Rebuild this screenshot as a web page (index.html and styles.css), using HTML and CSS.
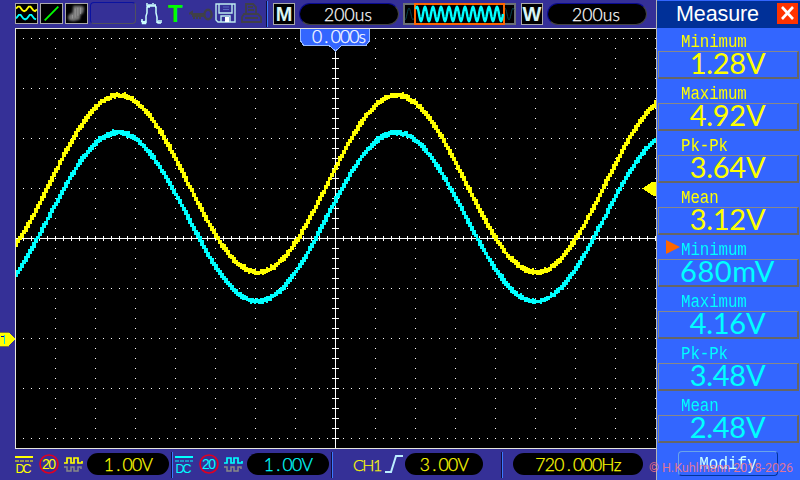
FILE: index.html
```html
<!DOCTYPE html>
<html lang="en">
<head>
<meta charset="utf-8">
<title>Oscilloscope</title>
<link rel="stylesheet" href="styles.css">
</head>
<body>
<div class="scope">
  <main class="main">
    <header class="topbar">
      <svg class="ico box" width="23" height="21" viewBox="0 0 23 21"><path d="M0 5l2-2 2 0 3 4 2 1 2-1 3-4 2 0 3 4 2 1 2-2" stroke="#ff0"/><path d="M0 16l3-4 2 0 3 4 2 1 2-1 3-4 2 0 3 4 2 1" stroke="#0ff"/></svg>
      <svg class="ico box gap2" width="23" height="21" viewBox="0 0 23 21"><path d="M4 18L19 3" stroke="#0f0"/></svg>
      <svg class="ico box gap2" width="23" height="21" viewBox="0 0 23 21"><path class="blob" d="M8 2h9l3 2-1 6-3 2-1 5-7 2-5-1-1-4 2-3 3-1z" fill="#777"/><path d="M10 5v10M13 4v9M7 12v4M16 4v7" stroke="#999" stroke-width="1"/></svg>
      <div class="slot"></div>
      <svg class="ico pulse" width="21" height="22" viewBox="0 0 21 22"><path d="M0 18.500h1.500v2h3v-3M1 18v-2M3 20v-2M5 20V13l1-3V4h3M14 4h1v6l1 4v4l1 2h3M6 3V0M8 3V1M10 3V1M12 3V0M14 3V1M6 3h9M18 20v-3M20 20v-3M16 20v-4" stroke="#cff" stroke-width="1.500"/></svg>
      <span class="trig">T</span>
      <svg class="ico key" width="24" height="14" viewBox="0 0 24 14"><path d="M0 6l3-2v2h12M3 8h12M5 8v3M8 8v3M11 8v3M3 7h11" stroke="#404048" stroke-width="1.9"/><ellipse cx="19" cy="6.5" rx="3.6" ry="4.8" stroke="#404048" stroke-width="2.4"/></svg>
      <svg class="ico floppy" width="21" height="20" viewBox="0 0 21 20"><path d="M1 1h19v18H3l-2-2zM4 1v9h13V1M6 19v-6h9v6" stroke="#bdeaf0" stroke-width="1.400"/><path d="M8 4h6M8 6.500h6" stroke="#5a68c0" stroke-width="1"/><path d="M10 14h4v5h-4z" fill="#fff"/></svg>
      <svg class="ico printer" width="21" height="21" viewBox="0 0 21 21"><path d="M5 10V1h7l3 3v6M7 4h5M7 7h6M3 11h14l3 3v5H1v-5zM4 15h13" stroke="#404048" stroke-width="1.8"/></svg>
      <i class="sep top"></i>
      <b class="mode m">M</b>
      <div class="pill tb"><span class="seg">200us</span></div>
      <svg class="preview" width="113" height="22" viewBox="0 0 113 22"><rect x="1" y="1" width="111" height="20" fill="#000" stroke="#6b7075" stroke-width="2"/><path id="ghost" stroke="#07444d" fill="none"/><rect x="12" y="1" width="89" height="20" fill="#000" stroke="#f60" stroke-width="2"/><path id="mini" stroke="#0ff" stroke-width="2.400" fill="none"/></svg>
      <b class="mode w">W</b>
      <div class="pill tb"><span class="seg">200us</span></div>
    </header>

    <section class="plot">
      <svg width="656" height="421" viewBox="0 28 656 421" shape-rendering="crispEdges">
        <path d="M15 28H656V449H15z" fill="#000"/>
        <g id="grid"></g>
        <path d="M15.500 449V28.500H656M15 448.500H656" stroke="#e6e6dc" fill="none"/>
        <path d="M335.500 50V448M16 238.500H656" stroke="#fff"/>
        <path id="ticks" stroke="#fff"/>
        <path id="ch1" stroke="#ff0"/>
        <path id="ch2" stroke="#0ff"/>
        <path d="M300 29h69v12l-3 4H304l-4-4z" fill="#36f"/>
        <path d="M328 45h14l-7 7z" fill="#36f"/>
        <path d="M300.500 29v12l3 4h25l7 6 7-6h24l3-4V29" fill="none" stroke="#9bf"/>
        <path d="M642 188.500l11-7h3v14h-3z" fill="#ff0"/>
        <path d="M0 332.500h9l6 6.500-6 6.500H0z" fill="#ff0"/>
        <path d="M0 332.500h9M0 346.500h9" stroke="#77713f"/>
        <path d="M1 336.500h3v7" stroke="#00a" stroke-width="1" fill="none"/><path d="M4.500 335v9" stroke="#0dd"/>
      </svg>
      <span class="seg offset">0<i>.</i>000s</span>
    </section>

    <footer class="bottombar">
      <div class="chan c1">
        <svg width="18" height="20" viewBox="0 0 18 20"><path d="M0 2h18" stroke="currentColor" stroke-width="2"/><path d="M0 6h18" stroke="currentColor" stroke-dasharray="4 1"/><text x="0.500" y="17.500" textLength="16" fill="currentColor">DC</text></svg>
        <svg class="bw" width="20" height="20" viewBox="0 0 20 20"><circle cx="10" cy="10" r="9" fill="none" stroke="#e00020" stroke-width="1.700"/><text class="big" x="3" y="15" textLength="14" fill="currentColor">20</text></svg>
        <svg class="sq" width="19" height="17" viewBox="0 0 19 17"><path d="M0 7h3V2h4v5h3V2h4v5h4V5" stroke="currentColor" stroke-width="1.700" fill="none"/><path d="M0 11h3v4h4v-4h3v4h4v-4h3v2" stroke="#888" stroke-width="1.500" fill="none"/></svg>
        <div class="pill"><span class="seg">1<i>.</i>00V</span></div>
      </div>
      <i class="sep"></i>
      <div class="chan c2">
        <svg width="18" height="20" viewBox="0 0 18 20"><path d="M0 2h18" stroke="currentColor" stroke-width="2"/><path d="M0 6h18" stroke="currentColor" stroke-dasharray="4 1"/><text x="0.500" y="17.500" textLength="16" fill="currentColor">DC</text></svg>
        <svg class="bw" width="20" height="20" viewBox="0 0 20 20"><circle cx="10" cy="10" r="9" fill="none" stroke="#e00020" stroke-width="1.700"/><text class="big" x="3" y="15" textLength="14" fill="currentColor">20</text></svg>
        <svg class="sq" width="19" height="17" viewBox="0 0 19 17"><path d="M0 7h3V2h4v5h3V2h4v5h4V5" stroke="currentColor" stroke-width="1.700" fill="none"/><path d="M0 11h3v4h4v-4h3v4h4v-4h3v2" stroke="#888" stroke-width="1.500" fill="none"/></svg>
        <div class="pill"><span class="seg">1<i>.</i>00V</span></div>
      </div>
      <i class="sep"></i>
      <div class="trigger">
        <span class="seg">CH1</span>
        <svg width="18" height="20" viewBox="0 0 18 20"><path d="M0 18h6L11 2h7" fill="none" stroke="#bef" stroke-width="2"/></svg>
        <div class="pill"><span class="seg">3<i>.</i>00V</span></div>
      </div>
      <i class="sep"></i>
      <div class="pill freq"><span class="seg">720<i>.</i>000Hz</span></div>
    </footer>
  </main>

  <aside class="panel">
    <header class="title"><span>Measure</span><svg width="21" height="21" viewBox="0 0 21 21"><path d="M0 0h21v21H0z" fill="#f30"/><path d="M5 4l11 12M16 4L5 16" stroke="#fff" stroke-width="2.600"/></svg></header>
    <div class="row y"><label>Minimum</label><output>1.28V</output></div>
    <div class="row y"><label>Maximum</label><output>4.92V</output></div>
    <div class="row y"><label>Pk-Pk</label><output>3.64V</output></div>
    <div class="row y"><label>Mean</label><output>3.12V</output></div>
    <div class="row c sel"><label>Minimum</label><output class="wide">680mV</output></div>
    <div class="row c"><label>Maximum</label><output>4.16V</output></div>
    <div class="row c"><label>Pk-Pk</label><output>3.48V</output></div>
    <div class="row c"><label>Mean</label><output>2.48V</output></div>
    <button class="modify"><span>Modify</span></button>
  </aside>
  <div class="credit">© H.Kuhlmann 2018-2026</div>
</div>
<script src="scope.js"></script>
</body>
</html>
```
FILE: styles.css
```css
* { box-sizing: border-box; }
body { margin: 0; font-family: "Liberation Sans", sans-serif; }
.scope { position: relative; display: flex; width: 800px; height: 480px; overflow: hidden; background: #353097; }
.main { width: 656px; display: flex; flex-direction: column; }
.topbar { height: 28px; display: flex; align-items: flex-start; padding: 3px 0 0 15px; }
.topbar > * { flex: none; }
.ico { fill: none; stroke-width: 2; }
.box { background: #000; border: 1px solid #aaa; }
.gap2 { margin-left: 2px; }
.blob { filter: blur(1px); }
.slot { width: 46px; height: 22px; margin: -1px 0 0 2px; border: 1px solid #0a12a0; border-right-color: #505060; border-bottom-color: #505060; border-radius: 4px; }
.pulse { margin-left: 5px; }
.trig { width: 14px; margin-left: 6px; font: bold 24px/21px "Liberation Sans", sans-serif; color: #0f0; }
.key { margin: 5px 0 0 7px; }
.floppy { margin-left: 2px; }
.printer { margin-left: 5px; }
.sep { width: 2px; height: 26px; background: linear-gradient(90deg, #101040 50%, #3a7aff 50%); }
.sep.top { margin: -2px 0 0 4px; }
.mode { width: 22px; height: 22px; background: #000; border: 1px solid #aaa; color: #d8f4f4; text-align: center; font-size: 20px; line-height: 21px; }
.mode.m { margin-left: 5px; }
.mode.w { margin-left: 5px; }
.pill { height: 22px; display: flex; align-items: center; justify-content: center; background: #000; border-radius: 11px; }
.pill.tb { width: 100px; margin-left: 4px; border: 1px solid #0a0a90; border-right-color: #444; border-bottom-color: #444; color: #fff; }
.pill.tb .seg { letter-spacing: .1px; position: relative; left: -1px; }
.preview { margin-left: 4px; }
.seg { font: 300 17.5px/22px Lato, sans-serif; letter-spacing: -0.7px; white-space: nowrap; position: relative; top: .5px; -webkit-text-stroke: .25px currentColor; }
.seg i { display: inline-block; width: 9.4px; text-align: center; font-style: normal; }
.plot { position: relative; height: 421px; }
.plot svg { display: block; }
.seg.offset { position: absolute; left: 312px; top: -2px; color: #fff; letter-spacing: -.9px; }
.bottombar { height: 31px; display: flex; align-items: flex-start; padding: 3px 0 0 15px; }
.bottombar > .sep { margin-left: 2px; margin-top: 0; }
.chan { display: flex; align-items: flex-start; padding-top: 1px; }
.chan text { font: 12.5px "Liberation Sans", sans-serif; }
.chan text.big { font-size: 14px; }
.chan > svg { margin-top: 2px; }
.chan .bw { margin: 1px 0 0 6px; }
.chan .sq { margin: 3px 0 0 5px; }
.chan .pill { width: 82px; margin-left: 4px; }
.c1 { color: #ff0; margin-left: 0; width: 154px; }
.c2 { color: #0ff; margin-left: 2px; width: 154px; }
.trigger { display: flex; color: #ff0; padding: 1px 0 0 20px; width: 166px; }
.trigger svg { margin: 1px 0 0 5px; }
.trigger > .seg { font-size: 16px; width: 27px; letter-spacing: -1.5px; }
.trigger .pill { width: 78px; margin-left: 2px; }
.freq { width: 130px; margin: 1px 0 0 10px; color: #ff0; }
.panel { width: 144px; background: #36f; border-left: 1px solid #b5b5b5; }
.title { height: 28px; display: flex; background: #003098; border-top: 1px solid #36f; color: #fff; padding: 2px 2px 0 19px; justify-content: space-between; }
.title span { font-size: 21.5px; line-height: 22px; letter-spacing: -0.1px; }
.row { height: 52px; padding: 0 1px; position: relative; }
.row.y { color: #ff0; }
.row.c { color: #0ff; }
.row label { display: block; height: 23px; padding-left: 23px; font: 15.8px/28px "Liberation Mono", monospace; letter-spacing: -0.1px; transform: scaleY(1.15); }
.row output { display: block; height: 28px; border: 1px solid #888; border-right: 2px solid #666; border-bottom: 2px solid #666; padding-right: 1px; text-align: center; font: 29px/22px Lato, sans-serif; letter-spacing: -.3px; }
.row output.wide { letter-spacing: .6px; }
.sel::before { content: ""; position: absolute; left: 9px; top: 4px; border-left: 14px solid #f60; border-top: 7.5px solid transparent; border-bottom: 7.5px solid transparent; }
.modify { display: block; margin: 7px 0 0 21px; width: 100px; height: 25px; padding: 0; background: none; border: 1px solid #6ba4e8; border-right-color: #039; border-bottom-color: #039; border-radius: 4px; color: #cff; font: 16px/22px "Liberation Mono", monospace; }
.modify span { display: block; transform: scaleY(1.15); }
.credit { position: absolute; left: 649px; top: 459px; font: 12.5px/17px Roboto, sans-serif; color: rgba(255, 120, 130, .85); white-space: nowrap; }
```
FILE: scope.js
```js
const $ = id => document.getElementById(id);

// Graticule: dotted rows every 50px, dotted columns every 40px.
let grid = '';
for (let y = 38; y <= 438; y += 50)
  grid += `<path d="M23 ${y}.5H656" stroke="#fff" stroke-dasharray="1 7"/>`;
for (let x = 55; x < 656; x += 40)
  grid += `<path d="M${x}.5 38V440" stroke="#fff" stroke-dasharray="1 9"/>`;
$('grid').innerHTML = grid;

let t = '';
for (let x = 23; x < 656; x += 8) t += `M${x}.5 236v5`;
for (let y = 58; y < 447; y += 10) t += `M332 ${y}.5h7`;
$('ticks').setAttribute('d', t);

let seed = 7;
const rnd = () => (seed = (seed * 16807) % 2147483647) / 2147483647;

// Sampled sine drawn as 2px columns with a little noise.
function trace(id, mid, amp, peak) {
  const f = x => mid - amp * Math.cos((x - peak) / 278 * 2 * Math.PI);
  let d = '';
  for (let x = 16; x < 656; x += 2) {
    const a = f(x), b = f(x + 2);
    const top = Math.round(Math.min(a, b) - 1.4 - rnd() * 1.7);
    const bot = Math.round(Math.max(a, b) + 1.4 + rnd() * 1.7);
    d += `M${x + 1} ${top}V${bot}`;
    if (rnd() > .85) d += `M${x + 1} ${top - 1}v${bot - top + 1}`;
  }
  $(id).setAttribute('d', d);
  $(id).setAttribute('stroke-width', 2);
}
trace('ch2', 217, 84.5, 118.5);
trace('ch1', 184, 88.5, 119);

const wave = (from, to, amp) => {
  let d = '';
  for (let x = from; x <= to; x += .5)
    d += `${d ? 'L' : 'M'}${x} ${(11 - amp * Math.sin((x - 12) / 8 * 2 * Math.PI)).toFixed(1)}`;
  return d;
};
$('mini').setAttribute('d', wave(13, 100, 7));
$('ghost').setAttribute('d', wave(2, 11, 6) + wave(102, 111, 6));
```
